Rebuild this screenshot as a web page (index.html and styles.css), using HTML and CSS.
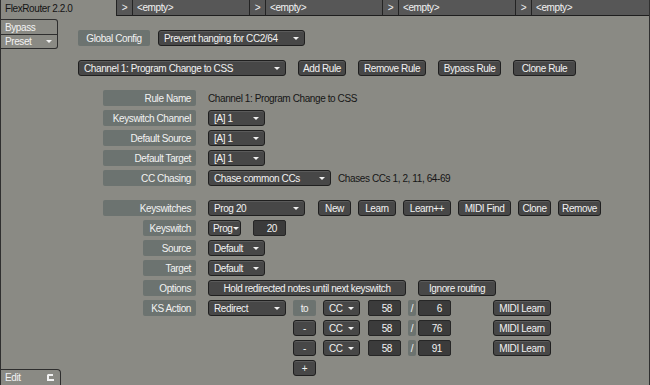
FILE: index.html
```html
<!DOCTYPE html>
<html lang="en">
<head>
    <meta charset="UTF-8">
    <meta name="viewport" content="width=device-width, initial-scale=1.0">
    <title>FlexRouter</title>
    <link rel="stylesheet" href="styles.css">
</head>
<body>
<div class="window">
    <div class="tabbar">
        <div class="tab tab-main">FlexRouter 2.2.0</div>
        <div class="tab tab-arrow">&gt;</div>
        <div class="tab tab-slot">&lt;empty&gt;</div>
        <div class="tab tab-arrow">&gt;</div>
        <div class="tab tab-slot">&lt;empty&gt;</div>
        <div class="tab tab-arrow">&gt;</div>
        <div class="tab tab-slot">&lt;empty&gt;</div>
        <div class="tab tab-arrow">&gt;</div>
        <div class="tab tab-slot tab-last">&lt;empty&gt;</div>
    </div>

    <div class="content">
        <div class="sidebar">
            <div class="side-menu">
                <div class="side-item">Bypass</div>
                <div class="side-item side-drop">Preset</div>
            </div>
            <div class="edit-tab">
                <span>Edit</span>
                <svg width="7" height="7" viewBox="0 0 7 7"><path d="M1 0h5v2H2v3h5v2H0V1z" fill="#f2f2f2"/></svg>
            </div>
        </div>

        <div class="main">
            <div class="row gap8">
                <div class="tag w72">Global Config</div>
                <div class="drop w147">Prevent hanging for CC2/64</div>
            </div>

            <div class="row top14">
                <div class="drop w208">Channel 1: Program Change to CSS</div>
                <div class="btn w48">Add Rule</div>
                <div class="btn w68">Remove Rule</div>
                <div class="btn w63">Bypass Rule</div>
                <div class="btn w63">Clone Rule</div>
            </div>

            <!-- rule settings -->
            <div class="form">
                <div class="row top14">
                    <div class="label">Rule Name</div>
                    <div class="text">Channel 1: Program Change to CSS</div>
                </div>
                <div class="row">
                    <div class="label">Keyswitch Channel</div>
                    <div class="drop w57">[A] 1</div>
                </div>
                <div class="row">
                    <div class="label">Default Source</div>
                    <div class="drop w57">[A] 1</div>
                </div>
                <div class="row">
                    <div class="label">Default Target</div>
                    <div class="drop w57">[A] 1</div>
                </div>
                <div class="row">
                    <div class="label">CC Chasing</div>
                    <div class="drop w123">Chase common CCs</div>
                    <div class="text chase-note">Chases CCs 1, 2, 11, 64-69</div>
                </div>

                <!-- keyswitches -->
                <div class="row top14">
                    <div class="label">Keyswitches</div>
                    <div class="drop w97">Prog 20</div>
                    <div class="ks-buttons">
                        <div class="btn w33">New</div>
                        <div class="btn w38">Learn</div>
                        <div class="btn w48">Learn++</div>
                        <div class="btn w53">MIDI Find</div>
                        <div class="btn w33">Clone</div>
                        <div class="btn w43">Remove</div>
                    </div>
                </div>
                <div class="row">
                    <div class="label sub">Keyswitch</div>
                    <div class="drop drop-tight w33">Prog</div>
                    <div class="num w33">20</div>
                </div>
                <div class="row">
                    <div class="label sub">Source</div>
                    <div class="drop w57">Default</div>
                </div>
                <div class="row">
                    <div class="label sub">Target</div>
                    <div class="drop w57">Default</div>
                </div>
                <div class="row">
                    <div class="label sub">Options</div>
                    <div class="btn w198">Hold redirected notes until next keyswitch</div>
                    <div class="btn w78">Ignore routing</div>
                </div>
                <div class="row">
                    <div class="label sub">KS Action</div>
                    <div class="drop w78">Redirect</div>
                    <div class="route first">
                        <div class="tag w23">to</div>
                        <div class="drop cc">CC</div>
                        <div class="num value">58</div>
                        <div class="tag slash">/</div>
                        <div class="num second">6</div>
                        <div class="btn learn">MIDI Learn</div>
                    </div>
                </div>
                <div class="row">
                    <div class="route">
                        <div class="btn w23">-</div>
                        <div class="drop cc">CC</div>
                        <div class="num value">58</div>
                        <div class="tag slash">/</div>
                        <div class="num second">76</div>
                        <div class="btn learn">MIDI Learn</div>
                    </div>
                </div>
                <div class="row">
                    <div class="route">
                        <div class="btn w23">-</div>
                        <div class="drop cc">CC</div>
                        <div class="num value">58</div>
                        <div class="tag slash">/</div>
                        <div class="num second">91</div>
                        <div class="btn learn">MIDI Learn</div>
                    </div>
                </div>
                <div class="row">
                    <div class="route">
                        <div class="btn w23">+</div>
                    </div>
                </div>
            </div>
        </div>
    </div>
</div>
</body>
</html>
```

FILE: styles.css
```css
* {
    box-sizing: border-box;
}

body {
    margin: 0;
    font-family: "Liberation Sans", Arial, sans-serif;
    font-size: 10px;
    letter-spacing: -0.4px;
    background: #8a8a84;
}

.window {
    width: 650px;
    height: 385px;
    display: flex;
    flex-direction: column;
    border-left: 1px solid #2f2f2f;
    border-right: 1px solid #2f2f2f;
    background: #8a8a84;
}

/* tabs */
.tabbar {
    display: flex;
    height: 16px;
    flex-shrink: 0;
}

.tab {
    height: 16px;
    display: flex;
    align-items: center;
    border-right: 1px solid #232323;
    border-bottom: 1px solid #1e1e1e;
    background: #575757;
    color: #f2f2f2;
    white-space: nowrap;
}

.tab-main {
    width: 116px;
    padding-left: 4px;
    background: #8a8a84;
    color: #141414;
    border-bottom: none;
}

.tab-arrow {
    width: 16px;
    justify-content: center;
}

.tab-slot {
    width: 117px;
    padding-left: 4px;
}

.tab-last {
    flex: 1;
    border-right: none;
}

.content {
    flex: 1;
    display: flex;
}

/* left column */
.sidebar {
    width: 60px;
    display: flex;
    flex-direction: column;
    justify-content: space-between;
}

.side-menu {
    width: 57px;
    margin-top: 3px;
    border: 1px solid #2e2e2e;
    border-left: none;
    border-radius: 0 3px 3px 0;
}

.side-item {
    height: 14px;
    display: flex;
    align-items: center;
    justify-content: space-between;
    padding: 0 5px 0 4px;
    color: #f2f2f2;
}

.side-item + .side-item {
    border-top: 1px solid #2e2e2e;
}

.side-drop::after {
    content: "";
    border-left: 3px solid transparent;
    border-right: 3px solid transparent;
    border-top: 3px solid #f2f2f2;
}

.edit-tab {
    height: 16px;
    display: flex;
    align-items: center;
    justify-content: space-between;
    padding: 0 6px 0 4px;
    border-top: 1px solid #2e2e2e;
    border-right: 1px solid #2e2e2e;
    border-top-right-radius: 4px;
    color: #f2f2f2;
}

/* main panel */
.main {
    padding: 14px 0 0 17px;
}

.row {
    display: flex;
    align-items: center;
    gap: 12px;
    height: 16px;
    margin-top: 4px;
}

.main > .row:first-child {
    margin-top: 0;
}

.row.top14 {
    margin-top: 14px;
}

.row.gap8 {
    gap: 8px;
}

.form {
    margin-left: 25px;
}

.btn,
.drop,
.num,
.tag,
.label {
    height: 16px;
    display: flex;
    align-items: center;
    flex-shrink: 0;
    white-space: nowrap;
    color: #f2f2f2;
}

.btn,
.drop {
    background: #474747;
    border: 1px solid #1f1f1f;
    border-radius: 3px;
    box-shadow: inset 0 1px 0 #5a5a5a;
}

.btn {
    justify-content: center;
}

.drop {
    justify-content: space-between;
    padding: 0 5px 0 5px;
}

.drop::after {
    content: "";
    border-left: 3px solid transparent;
    border-right: 3px solid transparent;
    border-top: 3px solid #f2f2f2;
}

.drop-tight {
    padding: 0 3px 0 4px;
}

.num {
    justify-content: flex-end;
    padding-right: 8px;
    background: #3b3b3b;
    border: 1px solid #262626;
    border-radius: 2px;
}

.tag,
.label {
    background: #6c7370;
    border-radius: 2px;
}

.tag {
    justify-content: center;
}

.label {
    width: 93px;
    justify-content: flex-end;
    padding-right: 5px;
}

.label.sub {
    width: 53px;
    margin-left: 40px;
}

.text {
    color: #161616;
    white-space: nowrap;
}

.chase-note {
    margin-left: -5px;
}

.ks-buttons {
    display: flex;
    gap: 7px;
    margin-left: 1px;
}

/* ks action routing */
.route {
    display: flex;
    margin-left: 190px;
}

.route.first {
    margin-left: -5px;
}

.route .cc {
    width: 37px;
    margin-left: 7px;
}

.route .value {
    width: 33px;
    margin-left: 8px;
}

.route .slash {
    width: 8px;
    margin-left: 7px;
}

.route .second {
    width: 33px;
    margin-left: 2px;
}

.route .learn {
    width: 58px;
    margin-left: 42px;
}

.w23 { width: 23px; }
.w33 { width: 33px; }
.w38 { width: 38px; }
.w43 { width: 43px; }
.w48 { width: 48px; }
.w53 { width: 53px; }
.w57 { width: 57px; }
.w63 { width: 63px; }
.w68 { width: 68px; }
.w72 { width: 72px; }
.w78 { width: 78px; }
.w97 { width: 97px; }
.w123 { width: 123px; }
.w147 { width: 147px; }
.w198 { width: 198px; }
.w208 { width: 208px; }
```
